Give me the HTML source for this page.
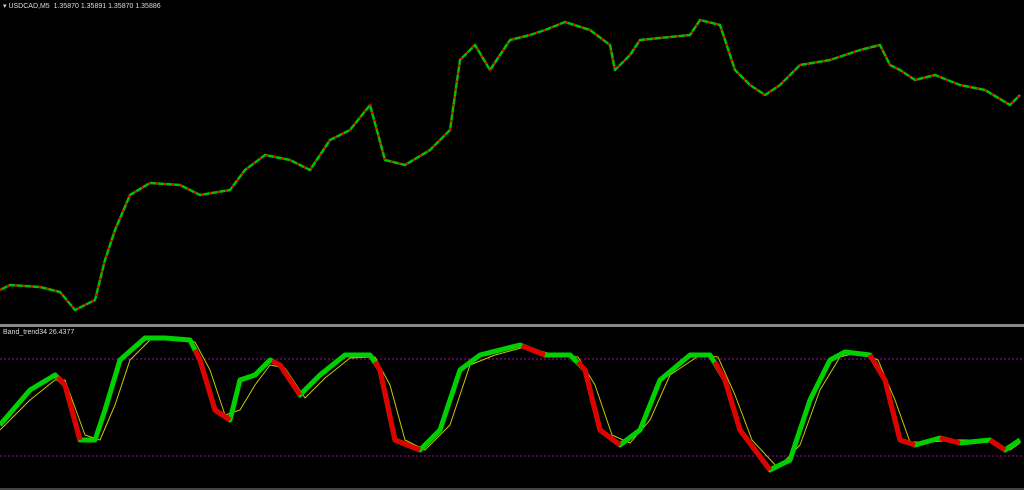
<!DOCTYPE html>
<html><head><style>
html,body{margin:0;padding:0;background:#000;width:1024px;height:490px;overflow:hidden;font-family:"Liberation Sans",sans-serif}
.t{position:absolute;color:#ddd;font-size:7px}
</style></head><body>
<svg width="1024" height="490" style="position:absolute;left:0;top:0">
<rect x="0" y="324" width="1024" height="3" fill="#888"/>
<rect x="0" y="488" width="1024" height="2" fill="#444"/>
<line x1="0" y1="359" x2="1024" y2="359" stroke="#b000b0" stroke-dasharray="2 2"/>
<line x1="0" y1="456" x2="1024" y2="456" stroke="#b000b0" stroke-dasharray="2 2"/>
<g fill="none" stroke-linejoin="round">
<polyline stroke="#00c000" stroke-width="2.5" points="0,290 10,285 40,287 60,292 75,310 95,300 105,260 115,230 130,195 150,183 180,185 200,195 230,190 245,170 265,155 290,160 310,170 330,140 350,130 370,105 385,160 405,165 430,150 450,130 460,60 475,45 490,70 510,40 530,35 545,30 565,22 590,30 610,45 615,70 630,55 640,40 660,38 690,35 700,20 720,25 735,70 750,85 765,95 780,85 800,65 830,60 860,50 880,45 890,65 900,70 915,80 935,75 960,85 985,90 1010,105 1020,95"/>
<polyline stroke="#e00000" stroke-width="2.5" stroke-dasharray="2 6" points="0,290 10,285 40,287 60,292 75,310 95,300 105,260 115,230 130,195 150,183 180,185 200,195 230,190 245,170 265,155 290,160 310,170 330,140 350,130 370,105 385,160 405,165 430,150 450,130 460,60 475,45 490,70 510,40 530,35 545,30 565,22 590,30 610,45 615,70 630,55 640,40 660,38 690,35 700,20 720,25 735,70 750,85 765,95 780,85 800,65 830,60 860,50 880,45 890,65 900,70 915,80 935,75 960,85 985,90 1010,105 1020,95"/>
<polyline stroke="#c8c800" stroke-width="1" points="0,430 30,400 55,380 65,380 85,435 100,440 115,405 130,360 150,340 175,338 195,342 210,370 225,415 240,410 255,385 270,365 285,368 305,398 325,378 350,358 375,357 390,385 405,440 425,450 450,425 470,365 495,355 525,347 555,355 578,357 595,385 612,435 630,443 650,420 670,375 700,355 718,357 735,395 752,440 778,468 800,445 820,390 840,357 860,352 878,360 895,400 910,442 930,442 955,440 985,440 1010,450 1020,443"/>
<polyline stroke="#00d000" stroke-width="5" points="0,425 30,390 55,375 65,385 80,440 95,440 105,410 120,360 145,338 165,338 190,340 200,360 215,410 230,420 240,380 255,375 270,360 280,365 300,395 320,375 345,355 370,355 380,370 395,440 420,450 440,430 460,370 480,355 520,345 545,355 570,355 585,370 600,430 620,445 640,430 660,380 690,355 710,355 725,380 740,430 770,470 790,460 810,400 830,360 845,352 870,355 885,380 900,440 915,445 940,438 960,443 990,440 1005,450 1020,440"/>
<g stroke="#e00000" stroke-width="5">
<polyline points="58,377 65,385 80,440"/>
<polyline points="195,350 200,360 215,410 230,420"/>
<polyline points="272,361 280,365 300,395"/>
<polyline points="375,362 380,370 395,440 420,450"/>
<polyline points="522,346 545,355"/>
<polyline points="578,362 585,370 600,430 620,445"/>
<polyline points="715,362 725,380 740,430 770,470"/>
<polyline points="870,355 885,380 900,440 915,445"/>
<polyline points="940,438 960,443"/>
<polyline points="990,440 1005,450"/>
</g>
</g>
</svg>
<div class="t" style="left:3px;top:2px">▾ USDCAD,M5 &nbsp;1.35870 1.35891 1.35870 1.35886</div>
<div class="t" style="left:3px;top:329px">Band_trend34 26.4377</div>
</body></html>
